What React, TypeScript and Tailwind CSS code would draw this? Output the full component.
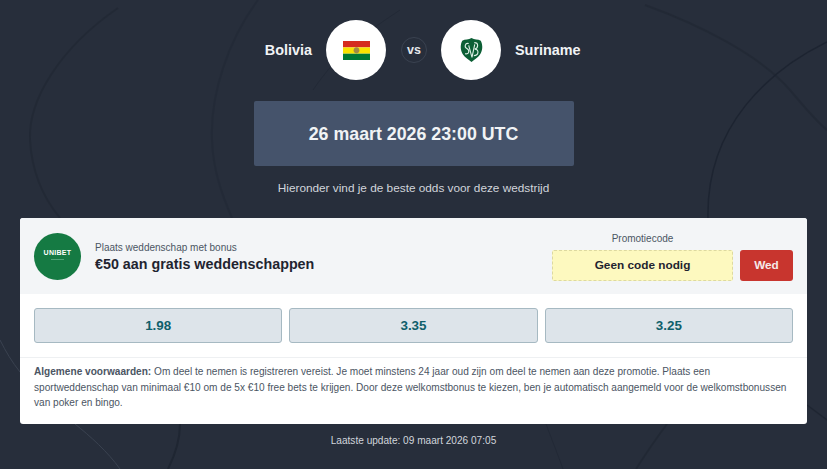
import React from 'react';

const odds = ['1.98', '3.35', '3.25'];

function BackgroundCurves() {
  return (
    <svg className="absolute inset-0 w-full h-full pointer-events-none" viewBox="0 0 827 469" fill="none">
      <path d="M118 8C60 48 28 100 30 140C32 175 45 200 60 218" stroke="#1f2632" strokeWidth="2" opacity="0.6" />
      <path d="M258 0C228 40 210 95 212 140C213 170 222 195 232 218" stroke="#222936" strokeWidth="2" opacity="0.7" />
      <path d="M645 5C700 25 760 55 790 90C805 108 815 120 827 130" stroke="#1f2632" strokeWidth="2" opacity="0.6" />
      <path d="M827 42C770 70 706 125 708 218" stroke="#1d2431" strokeWidth="1.5" />
      <path d="M400 10C370 30 340 50 313 90" stroke="#222936" strokeWidth="1" />
      <path d="M0 340C6 352 12 362 20 372" stroke="#3a4250" strokeWidth="1" />
      <path d="M75 424C90 436 108 452 120 469" stroke="#3a4250" strokeWidth="1" />
      <path d="M180 424C180 440 175 455 168 469" stroke="#1f2632" strokeWidth="2" />
      <path d="M546 424C552 440 558 455 563 469" stroke="#222936" strokeWidth="1" />
      <path d="M667 424C655 440 645 455 636 469" stroke="#1f2632" strokeWidth="2" opacity="0.7" />
      <path d="M807 405L827 420" stroke="#1f2632" strokeWidth="1.5" />
    </svg>
  );
}

function BoliviaFlag() {
  return (
    <svg width="27" height="19" viewBox="0 0 27 19">
      <rect width="27" height="6.4" fill="#d52b1e" />
      <rect y="6.4" width="27" height="6.3" fill="#f9e300" />
      <rect y="12.7" width="27" height="6.3" fill="#007934" />
      <path d="M13.5 6.2C15.4 6.2 16.4 7.8 16.4 9.6C16.4 11.4 15.2 12.4 13.5 12.4C11.8 12.4 10.6 11.4 10.6 9.6C10.6 7.8 11.6 6.2 13.5 6.2Z" fill="#a08a45" />
    </svg>
  );
}

function SurinameCrest() {
  return (
    <svg width="23" height="26" viewBox="0 0 24 28">
      <path d="M12 1C15 3 19 2 22 4C24.5 9 24 15 21 19C19 22 15 24 12 27C9 24 5 22 3 19C0 15 -0.5 9 2 4C5 2 9 3 12 1Z" fill="#0c5f35" />
      <path d="M9 7C5 6 4 11 7 12.5C10 14 10 19 5 18M9 9L12.5 22L15.5 8M15 6C20 6 19.5 12 15.5 13C20.5 13 20 20 14.5 20" stroke="#dcefe4" strokeWidth="1.2" fill="none" />
    </svg>
  );
}

export default function App() {
  return (
    <div className="relative h-[469px] overflow-hidden bg-[#272e3b] font-['Liberation_Sans',Arial,sans-serif]">
      <BackgroundCurves />

      <div className="relative z-10 flex flex-col items-center px-5 pt-5">
        <div className="w-full grid grid-cols-[1fr_auto_1fr] items-center">
          <div className="flex items-center justify-end">
            <span className="pt-px text-[14.4px] font-bold text-[#f1f3f5] mr-[14px]">Bolivia</span>
            <div className="w-[60px] h-[60px] rounded-full bg-white flex items-center justify-center">
              <BoliviaFlag />
            </div>
          </div>
          <div className="w-[26px] h-[26px] ml-[15px] mr-[14px] rounded-full border border-[#3a4250] flex items-center justify-center text-[12.5px] font-bold text-[#e5e7eb]">
            vs
          </div>
          <div className="flex items-center">
            <div className="w-[60px] h-[60px] rounded-full bg-white flex items-center justify-center">
              <SurinameCrest />
            </div>
            <span className="pt-px text-[14.4px] font-bold text-[#f1f3f5] ml-[14px]">Suriname</span>
          </div>
        </div>

        <div className="mt-[21px] w-[320px] h-[65px] rounded-[2px] bg-[#45536b] flex items-center justify-center pt-px text-[17.8px] font-bold text-[#f1f3f5]">
          26 maart 2026 23:00 UTC
        </div>

        <p className="mt-[14px] text-[11.8px] leading-[16px] text-[#d1d5db]">
          Hieronder vind je de beste odds voor deze wedstrijd
        </p>

        <div className="mt-[22px] w-[787px] rounded-[3px] bg-white overflow-hidden">
          <div className="h-[76px] bg-[#f3f5f7] flex items-center justify-between px-[14px]">
            <div className="flex items-center">
              <div className="w-[47px] h-[47px] rounded-full bg-[#157a43] flex flex-col items-center justify-center mr-[14px]">
                <span className="text-[7px] leading-[8px] font-bold text-white tracking-[0.3px] -mt-[3px]">UNIBET</span>
                <span className="w-[13px] h-px mt-[2px] bg-[#4fa476]" />
              </div>
              <div>
                <div className="text-[10px] leading-[14px] text-[#4b5563] mt-[2px]">Plaats weddenschap met bonus</div>
                <div className="text-[14.3px] leading-[18px] font-bold text-[#1f2430]">€50 aan gratis weddenschappen</div>
              </div>
            </div>

            <div className="flex flex-col items-center">
              <div className="self-start w-[181px] pt-px text-center text-[10px] leading-[14px] text-[#4b5563] mb-[4px]">Promotiecode</div>
              <div className="flex items-center gap-[7px]">
                <div className="w-[181px] h-[31px] rounded-[2px] border border-dashed border-[#ddd9a0] bg-[#fdf9bf] flex items-center justify-center text-[11.8px] font-bold text-[#1f2430]">
                  Geen code nodig
                </div>
                <div className="w-[53px] h-[31px] rounded-[3px] bg-[#c8352e] flex items-center justify-center text-[11.8px] font-bold text-[#f5e9e8]">
                  Wed
                </div>
              </div>
            </div>
          </div>

          <div className="grid grid-cols-3 gap-[7px] px-[14px] pt-[14px] pb-[14px] border-b border-[#eef0f2]">
            {odds.map(o => (
              <div key={o} className="h-[35px] pt-px rounded-[3px] border border-[#a6b9c2] bg-[#dde4ea] flex items-center justify-center text-[13.4px] font-bold text-[#0f5f6b]">
                {o}
              </div>
            ))}
          </div>

          <p className="pl-[14px] pr-[17px] pt-[6px] pb-[13px] text-[10.1px] leading-[15.5px] text-[#4b5563]">
            <strong className="font-bold">Algemene voorwaarden:</strong> Om deel te nemen is registreren vereist. Je moet minstens 24 jaar oud zijn om deel te nemen aan deze promotie. Plaats een sportweddenschap van minimaal €10 om de 5x €10 free bets te krijgen. Door deze welkomstbonus te kiezen, ben je automatisch aangemeld voor de welkomstbonussen van poker en bingo.
          </p>
        </div>

        <p className="mt-[10px] text-[10.1px] leading-[14px] text-[#d1d5db]">Laatste update: 09 maart 2026 07:05</p>
      </div>
    </div>
  );
}
